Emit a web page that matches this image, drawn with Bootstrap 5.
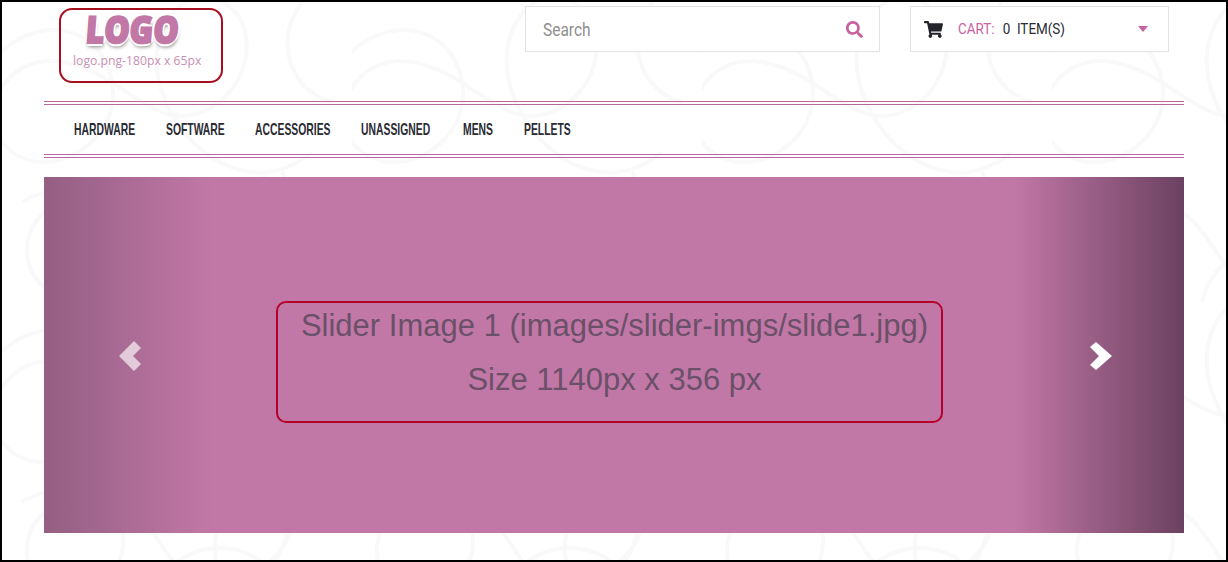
<!DOCTYPE html>
<html lang="en">
<head>
    <meta charset="UTF-8">
    <meta name="viewport" content="width=device-width, initial-scale=1.0">
    <title>Shop</title>
    <link href="https://cdn.jsdelivr.net/npm/bootstrap@5.3.2/dist/css/bootstrap.min.css" rel="stylesheet">
    <style>
        html, body { height: 100%; }
        body {
            background: #fff;
            border: 2px solid #000;
            overflow: hidden;
            position: relative;
            font-family: Roboto, sans-serif;
        }

        .swirl-bg { position: absolute; inset: 0; width: 100%; height: 100%; }

        .page-wrap { width: 1140px; position: relative; }

        .top-bar { height: 99px; }

        .logo-box {
            width: 164px;
            height: 75px;
            margin: 6px 0 0 15px;
            border: 2px solid #a50f1f;
            border-radius: 13px;
            color: #c78fb2;
        }

        .logo-word {
            width: max-content;
            font-family: "Open Sans", sans-serif;
            font-weight: 800;
            font-size: 37px;
            line-height: 34px;
            margin: 2px 0 0 25px;
            color: #c278a6;
            -webkit-text-stroke: 2px #c278a6;
            transform: scaleX(.86) skewX(-5deg);
            transform-origin: left center;
            text-shadow: 3px 0 0 #fff, -3px 0 0 #fff, 0 3px 0 #fff, 0 -3px 0 #fff, 1px 4px 4px rgba(0, 0, 0, .45);
        }

        .logo-note {
            font-family: "Open Sans", sans-serif;
            font-size: 12.2px;
            line-height: 14px;
            margin: 8px 0 0 12px;
        }

        .search-box {
            width: 355px;
            height: 46px;
            margin: 4px 0 0 302px;
            padding: 0 16px 0 17px;
            background: #fff;
            border: 1px solid #e2e2e2;
        }

        .search-text {
            font-size: 18px;
            color: #8f8f8f;
            transform: scaleX(.86);
            transform-origin: left center;
        }

        .cart-box {
            width: 259px;
            height: 46px;
            margin: 4px 0 0 30px;
            padding: 0 20px 0 13px;
            background: #fff;
            border: 1px solid #e2e2e2;
            font-size: 14px;
            color: #2b2b33;
        }

        .cart-text { transform: scaleX(.96); transform-origin: left center; margin: 1px 0 0 15px; white-space: nowrap; }
        .cart-label { color: #c9619f; margin-right: 5px; }
        .cart-caret {
            border-left: 5.5px solid transparent;
            border-right: 5.5px solid transparent;
            border-top: 6px solid #c9619f;
        }

        /* fixed columns: the condensed caps are a squeezed font, so flow can't size them */
        .main-menu {
            display: grid;
            grid-template-columns: 62px 59px 76px 72px 31px 44px;
            column-gap: 30px;
            height: 57px;
            padding-left: 30px;
            border-top: 4px double #b9659e;
            border-bottom: 4px double #b9659e;
        }

        .main-menu .nav-link {
            padding: 0;
            width: max-content;
            font-family: "Liberation Sans", sans-serif;
            font-size: 17px;
            font-weight: 700;
            color: #2b2b33;
            transform: scaleX(.61);
            transform-origin: left center;
        }

        .hero-slide {
            height: 356px;
            margin-top: 19px;
            background: linear-gradient(90deg, #945f83 0, #c278a6 15%, #c278a6 85%, #6b4160 100%);
        }

        .slide-note {
            width: 667px;
            height: 122px;
            margin: 14px 9px 0 0;
            padding-left: 10px;
            border: 2px solid #b5002a;
            border-radius: 10px;
            font-family: "Liberation Sans", Arial, sans-serif;
            font-size: 31px;
            line-height: 54px;
            color: #6a5068;
        }

        .note-lines { margin-top: -4px; }

        .carousel-control-prev, .carousel-control-next { width: 15%; opacity: 1; padding-top: 2px; }
        .carousel-control-next { padding-left: 5px; }
        .carousel-control-prev svg { opacity: .65; }
    </style>
</head>
<body>
    <!-- faint swirl wallpaper -->
    <svg class="swirl-bg" xmlns="http://www.w3.org/2000/svg" aria-hidden="true">
        <defs>
            <pattern id="swirl" width="350" height="300" patternUnits="userSpaceOnUse">
                <g fill="none" stroke="#f9f9f9" stroke-width="4">
                    <path d="M-10 60c40-50 110-40 120 20s-60 100-100 70-10-100 50-90 90 70 140 50 60-90 20-110-80 30-60 90 90 110 150 60"/>
                    <path d="M20 200c50-30 110 0 100 50s-70 60-90 20 20-90 80-70 50 90 110 80 90-60 60-110"/>
                    <ellipse cx="250" cy="230" rx="34" ry="56" transform="rotate(20 250 230)"/>
                    <path d="M150 300c10-50 70-70 110-40M300 0c-30 40-10 90 30 100"/>
                </g>
            </pattern>
        </defs>
        <rect width="100%" height="100%" fill="url(#swirl)"/>
    </svg>

    <div class="page-wrap mx-auto">
        <header class="top-bar d-flex align-items-start">
            <a class="logo-box d-block text-decoration-none" href="#">
                <div class="logo-word">LOGO</div>
                <div class="logo-note">logo.png-180px x 65px</div>
            </a>
            <div class="search-box d-flex align-items-center justify-content-between">
                <span class="search-text">Search</span>
                <svg width="17" height="17" viewBox="0 0 512 512" fill="#c9619f"><path d="M505 442.7L405.3 343c-4.5-4.5-10.6-7-17-7H372c27.6-35.3 44-79.7 44-128C416 93.1 322.9 0 208 0S0 93.1 0 208s93.1 208 208 208c48.3 0 92.7-16.4 128-44v16.3c0 6.4 2.5 12.5 7 17l99.7 99.7c9.4 9.4 24.6 9.4 33.9 0l28.3-28.3c9.4-9.4 9.4-24.6.1-34zM208 336c-70.7 0-128-57.2-128-128 0-70.7 57.2-128 128-128 70.7 0 128 57.2 128 128 0 70.7-57.2 128-128 128z"/></svg>
            </div>
            <div class="cart-box d-flex align-items-center">
                <svg width="19" height="17" viewBox="0 0 576 512" fill="#23232b"><path d="M528.12 301.319l47.273-208C578.806 78.301 567.391 64 551.99 64H159.208l-9.166-44.81C147.758 8.021 137.93 0 126.529 0H24C10.745 0 0 10.745 0 24v16c0 13.255 10.745 24 24 24h69.883l70.248 343.435C147.325 417.1 136 435.222 136 456c0 30.928 25.072 56 56 56s56-25.072 56-56c0-15.674-6.447-29.835-16.824-40h209.647C430.447 426.165 424 440.326 424 456c0 30.928 25.072 56 56 56s56-25.072 56-56c0-22.172-12.888-41.332-31.579-50.405l5.517-24.276c3.413-15.018-8.002-29.319-23.403-29.319H218.117l-6.545-32h293.145c11.206 0 20.92-7.754 23.403-18.681z"/></svg>
                <span class="cart-text"><span class="cart-label">CART:</span> 0 &nbsp;ITEM(S)</span>
                <span class="cart-caret ms-auto"></span>
            </div>
        </header>

        <nav class="main-menu nav align-items-center">
            <a class="nav-link" href="#">HARDWARE</a>
            <a class="nav-link" href="#">SOFTWARE</a>
            <a class="nav-link" href="#">ACCESSORIES</a>
            <a class="nav-link" href="#">UNASSIGNED</a>
            <a class="nav-link" href="#">MENS</a>
            <a class="nav-link" href="#">PELLETS</a>
        </nav>

        <div class="carousel slide hero-slide d-flex align-items-center justify-content-center">
            <div class="slide-note text-center">
                <div class="note-lines">
                    <div>Slider Image 1 (images/slider-imgs/slide1.jpg)</div>
                    <div>Size 1140px x 356 px</div>
                </div>
            </div>
            <a class="carousel-control-prev" href="#">
                <svg width="22" height="30" viewBox="0 0 22 30" fill="#fff"><path d="M15 0 0 15l15 15 7-7-8-8 8-8z"/></svg>
            </a>
            <a class="carousel-control-next" href="#">
                <svg width="22" height="30" viewBox="0 0 22 30" fill="#fff"><path d="M6 1l16 14L6 29l-6-5 9-9-9-9z"/></svg>
            </a>
        </div>
    </div>

    <script src="https://cdn.jsdelivr.net/npm/bootstrap@5.3.2/dist/js/bootstrap.bundle.min.js"></script>
</body>
</html>
